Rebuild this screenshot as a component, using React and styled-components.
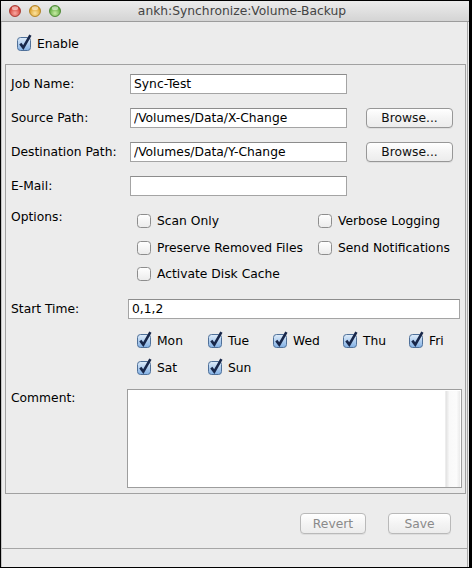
import React from 'react'
import styled, { createGlobalStyle } from 'styled-components'

const GlobalStyle = createGlobalStyle`
  html, body {
    margin: 0;
    padding: 0;
    background: #fff;
  }
  body {
    font-family: "DejaVu Sans", "Liberation Sans", sans-serif;
    font-size: 12.3px;
    color: #000;
  }
  * { box-sizing: border-box; }
`

const LIGHTS = [
  { id: 'close', hi: '#f8aaa2', lo: '#d1372c', edge: '#9c2b22' },
  { id: 'min', hi: '#fbe3a0', lo: '#d99a1f', edge: '#a67513' },
  { id: 'max', hi: '#c8eba4', lo: '#55a436', edge: '#3b7a22' },
]

const DAYS = ['Mon', 'Tue', 'Wed', 'Thu', 'Fri', 'Sat', 'Sun']

function TrafficLight ({ hi, lo, edge, id }) {
  return (
    <svg width="12" height="12" viewBox="0 0 12 12">
      <defs>
        <radialGradient id={`tl-${id}`} cx="50%" cy="70%" r="60%">
          <stop offset="0%" stopColor={hi} />
          <stop offset="100%" stopColor={lo} />
        </radialGradient>
      </defs>
      <circle cx="6" cy="6" r="5.5" fill={`url(#tl-${id})`} stroke={edge} strokeWidth="0.8" />
      <ellipse cx="6" cy="3.2" rx="3.2" ry="1.9" fill="#fff" opacity="0.55" />
    </svg>
  )
}

function CheckBox ({ checked }) {
  return (
    <svg width="16" height="17" viewBox="0 0 16 17">
      <defs>
        <linearGradient id="cb-on" x1="0" y1="0" x2="0" y2="1">
          <stop offset="0%" stopColor="#e0edfa" />
          <stop offset="100%" stopColor="#82b0e4" />
        </linearGradient>
        <linearGradient id="cb-off" x1="0" y1="0" x2="0" y2="1">
          <stop offset="0%" stopColor="#ffffff" />
          <stop offset="100%" stopColor="#ebebeb" />
        </linearGradient>
      </defs>
      <rect
        x="1.5" y="3.5" width="13" height="13" rx="3"
        fill={checked ? 'url(#cb-on)' : 'url(#cb-off)'}
        stroke={checked ? '#4f7099' : '#8d8d8d'}
      />
      {checked && (
        <path d="M4.3 9.6 L7.3 13.6 L14.4 1.2" fill="none" stroke="#18274a" strokeWidth="2.6" />
      )}
    </svg>
  )
}

function Check ({ checked, children }) {
  return (
    <CheckItem>
      <CheckBox checked={checked} />
      <span>{children}</span>
    </CheckItem>
  )
}

export default function App () {
  return (
    <>
      <GlobalStyle />
      <Window>
        <TitleBar>
          <Lights>
            {LIGHTS.map((l) => <TrafficLight key={l.id} {...l} />)}
          </Lights>
          <Title>ankh:Synchronize:Volume-Backup</Title>
        </TitleBar>
        <Body>
          <EnableRow>
            <Check checked>Enable</Check>
          </EnableRow>
          <Panel>
            <FormRow>
              <Label>Job Name:</Label>
              <TextField readOnly value="Sync-Test" />
            </FormRow>
            <FormRow $mt={13}>
              <Label>Source Path:</Label>
              <TextField readOnly value="/Volumes/Data/X-Change" />
              <Button $w={87}>Browse...</Button>
            </FormRow>
            <FormRow $mt={13}>
              <Label>Destination Path:</Label>
              <TextField readOnly value="/Volumes/Data/Y-Change" />
              <Button $w={87}>Browse...</Button>
            </FormRow>
            <FormRow $mt={13}>
              <Label>E-Mail:</Label>
              <TextField readOnly value="" />
            </FormRow>
            <FormRow $mt={13} $top>
              <Label>Options:</Label>
              <OptionGrid>
                <Check>Scan Only</Check>
                <Check>Verbose Logging</Check>
                <Check>Preserve Removed Files</Check>
                <Check>Send Notifications</Check>
                <Check>Activate Disk Cache</Check>
              </OptionGrid>
            </FormRow>
            <FormRow $mt={14}>
              <Label>Start Time:</Label>
              <TextField $wide readOnly value="0,1,2" />
            </FormRow>
            <FormRow $mt={12} $top>
              <Label />
              <DayGrid>
                {DAYS.map((d) => <Check key={d} checked>{d}</Check>)}
              </DayGrid>
            </FormRow>
            <FormRow $mt={11} $top>
              <Label $pad={1}>Comment:</Label>
              <CommentBox>
                <CommentText />
                <ScrollTrack />
              </CommentBox>
            </FormRow>
          </Panel>
          <Footer>
            <Button $w={66} disabled>Revert</Button>
            <Button $w={63} disabled>Save</Button>
          </Footer>
          <StatusBar />
        </Body>
      </Window>
    </>
  )
}

const Window = styled.div`
  width: 472px;
  height: 568px;
  display: flex;
  flex-direction: column;
  background: #ececec;
  border: 1px solid #000;
  border-right-width: 3px;
`

const TitleBar = styled.div`
  height: 21px;
  display: grid;
  grid-template-columns: 70px 1fr 56px;
  align-items: center;
  background: linear-gradient(#ececec, #d4d4d4);
  border-bottom: 1px solid #9c9c9c;
`

const Lights = styled.div`
  display: flex;
  gap: 8px;
  padding-left: 8px;
  svg { display: block; }
`

const Title = styled.div`
  text-align: center;
  color: #444;
  white-space: nowrap;
`

const Body = styled.div`
  flex: 1;
  display: flex;
  flex-direction: column;
  border-left: 1px solid #c4c4c4;
  border-right: 1px solid #a9a9a9;
  margin-right: 1px;
`

const EnableRow = styled.div`
  height: 20px;
  margin-top: 12px;
  padding-left: 14px;
  display: flex;
  align-items: center;
`

const CheckItem = styled.div`
  display: flex;
  align-items: center;
  gap: 5px;
  height: 20px;
  white-space: nowrap;
  svg { display: block; flex: none; margin-top: -3px; }
`

const Panel = styled.div`
  margin: 10px 1px 0 3px;
  padding: 8px 4px 5px 5px;
  border: 1px solid #a1a1a1;
`

const FormRow = styled.div`
  display: flex;
  align-items: ${(p) => (p.$top ? 'flex-start' : 'center')};
  margin-top: ${(p) => p.$mt || 0}px;
  min-height: 21px;
`

const Label = styled.div`
  width: 119px;
  flex: none;
  line-height: 16px;
  padding-top: ${(p) => p.$pad || 0}px;
  white-space: nowrap;
`

const TextField = styled.input`
  width: ${(p) => (p.$wide ? 'auto' : '217px')};
  flex: ${(p) => (p.$wide ? 1 : 'none')};
  margin: ${(p) => (p.$wide ? '0 1px 0 -2px' : '0')};
  height: 20px;
  padding: 0 3px;
  border: 1px solid #a4a4a4;
  border-top-color: #8c8c8c;
  border-radius: 0;
  background: #fff;
  font: inherit;
  color: #000;
  outline: none;
`

const Button = styled.button`
  width: ${(p) => p.$w}px;
  height: 20px;
  margin-left: 19px;
  padding: 0;
  border: 1px solid ${(p) => (p.disabled ? '#b9b9b9' : '#979797')};
  border-radius: 4px;
  background: linear-gradient(#ffffff, #f4f4f4 50%, #ececec);
  box-shadow: 0 1px 0 rgba(0, 0, 0, 0.06);
  font: inherit;
  color: ${(p) => (p.disabled ? '#8a8a8a' : '#111')};
`

const OptionGrid = styled.div`
  display: grid;
  grid-template-columns: 181px auto;
  row-gap: 6.5px;
  margin-top: 2px;
  padding-left: 6px;
`

const DayGrid = styled.div`
  display: grid;
  grid-template-columns: 71px 65px 70px 66px auto;
  row-gap: 7px;
  padding-left: 6px;
`

const CommentBox = styled.div`
  flex: 1;
  display: flex;
  height: 99px;
  margin: 0 -1px 0 -3px;
  border: 1px solid #9d9d9d;
  background: #fff;
`

const CommentText = styled.div`
  flex: 1;
`

const ScrollTrack = styled.div`
  width: 15px;
  margin: 1px 1px 0 0;
  background: linear-gradient(to right, #e2e2e2, #f9f9f9 25%, #fbfbfb 75%, #ebebeb);
  border-left: 1px solid #ededed;
`

const Footer = styled.div`
  flex: 1;
  display: flex;
  justify-content: flex-end;
  align-items: flex-start;
  padding: 19px 16px 0 0;
  button { margin-left: 22px; height: 21px; }
`

const StatusBar = styled.div`
  height: 19px;
  border-top: 1px solid #a6a6a6;
`
